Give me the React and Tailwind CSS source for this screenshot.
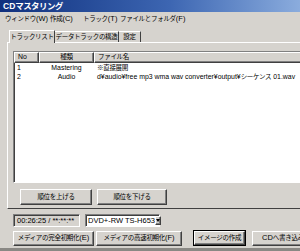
import React from "react";

const raised =
  "border border-t-white border-l-white border-r-[#404040] border-b-[#404040] shadow-[inset_-1px_-1px_0_#808080] bg-[#d6d3ce]";
const sunken =
  "border border-t-[#808080] border-l-[#808080] border-r-white border-b-white shadow-[inset_1px_1px_0_#404040]";

// japanese in the original is a narrow bitmap font, keep it small so glyphs don't collide
function J({ children }) {
  return <span className="text-[6.5px] tracking-[-0.3px]">{children}</span>;
}

function Btn({ children, className = "" }) {
  return (
    <div className={`${raised} flex items-center justify-center whitespace-nowrap ${className}`}>
      {children}
    </div>
  );
}

const rows = [
  { no: "1", kind: "Mastering", file: <J>※直接展開</J> },
  {
    no: "2",
    kind: "Audio",
    file: (
      <>
        d¥audio¥free mp3 wma wav converter¥output¥<J>シーケンス</J> 01.wav
      </>
    ),
  },
];

export default function App() {
  return (
    <div
      className="w-[300px] h-[251px] overflow-hidden bg-[#d6d3ce] text-[7.5px] leading-none text-black whitespace-nowrap"
      style={{ fontFamily: '"Liberation Sans", "Noto Sans CJK JP", sans-serif' }}
    >
      <div className="w-[340px] h-[251px] flex flex-col border-b-[3px] border-b-[#8a8884]">
        {/* title bar */}
        <div className="h-[12px] bg-gradient-to-r from-[#10307e] via-[#3d66b2] to-[#a4c2ea] flex items-center pl-[3px] text-white font-bold text-[8.5px]">
          CD<span className="tracking-[-0.6px]">マスタリング</span>
        </div>

        {/* menu bar */}
        <div className="h-[13px] flex items-center pl-[5px]">
          <span className="w-[45px]"><J>ウィンドウ</J>(W)</span>
          <span className="w-[33px]"><J>作成</J>(C)</span>
          <span className="w-[37px]"><J>トラック</J>(T)</span>
          <span><J>ファイルとフォルダ</J>(F)</span>
        </div>

        <div className="pl-[7px] pt-[4px]">
          {/* tabs */}
          <div className="flex items-end h-[13px] pl-[2px]">
            <div className="h-[13px] w-[46px] justify-center flex items-center border border-b-0 border-t-white border-l-white border-r-[#404040] bg-[#d6d3ce] relative top-[1px] z-10">
              <J>トラックリスト</J>
            </div>
            <div className="h-[11px] w-[64px] justify-center flex items-center border border-b-0 border-t-white border-l-0 border-r-[#404040]">
              <J>データトラックの構造</J>
            </div>
            <div className="h-[11px] w-[22px] justify-center flex items-center border border-b-0 border-t-white border-l-0 border-r-[#404040]">
              <J>設定</J>
            </div>
          </div>

          {/* tab panel */}
          <div className="h-[167px] border border-t-white border-l-white border-b-[#404040] border-r-[#404040] pl-[5px] pt-[8px]">
            <div className={`${sunken} bg-white h-[132px] w-[330px] text-[6.9px]`}>
              <div className="flex h-[11px]">
                <div className={`${raised} w-[25px] pl-[3px] flex items-center`}>No</div>
                <div className={`${raised} w-[55px] flex items-center justify-center`}><J>種類</J></div>
                <div className={`${raised} flex-1 pl-[3px] flex items-center`}><J>ファイル名</J></div>
              </div>
              <div className="pt-[1px]">
                {rows.map((r) => (
                  <div key={r.no} className="flex h-[9px] items-center">
                    <div className="w-[25px] pl-[3px]">{r.no}</div>
                    <div className="w-[55px] text-center">{r.kind}</div>
                    <div className="pl-[3px]">{r.file}</div>
                  </div>
                ))}
              </div>
            </div>

            <div className="flex gap-[5px] mt-[6px] ml-[7px]">
              <Btn className="w-[72px] h-[16px]"><J>順位を上げる</J></Btn>
              <Btn className="w-[70px] h-[16px]"><J>順位を下げる</J></Btn>
            </div>
          </div>
        </div>

        {/* status row */}
        <div className="flex items-center gap-[5px] pl-[13px] mt-[5px]">
          <div className={`${sunken} w-[67px] h-[13px] flex items-center pl-[3px]`}>
            00:26:25 / **:**:**
          </div>
          <div className={`${sunken} bg-white w-[75px] h-[13px] flex items-center pl-[2px] pr-[1px]`}>
            <span className="flex-1">DVD+-RW TS-H653</span>
            <div className={`${raised} w-[9px] h-[9px] flex items-center justify-center`}>
              <span className="block w-0 h-0 border-l-[2.5px] border-r-[2.5px] border-t-[3px] border-l-transparent border-r-transparent border-t-black" />
            </div>
          </div>
        </div>

        {/* bottom buttons */}
        <div className="flex items-center pl-[13px] mt-[3px]">
          <Btn className="w-[81px] h-[15px]"><J>メディアの完全初期化</J>(E)</Btn>
          <Btn className="w-[86px] h-[15px] ml-[2px]"><J>メディアの高速初期化</J>(F)</Btn>
          <div className="ml-[11px] border border-black">
            <Btn className="w-[51px] h-[14px]"><J>イメージの作成</J></Btn>
          </div>
          <Btn className="w-[60px] h-[15px] ml-[6px] justify-start pl-[9px]">CD<J>へ書き込み</J></Btn>
        </div>
      </div>
    </div>
  );
}
